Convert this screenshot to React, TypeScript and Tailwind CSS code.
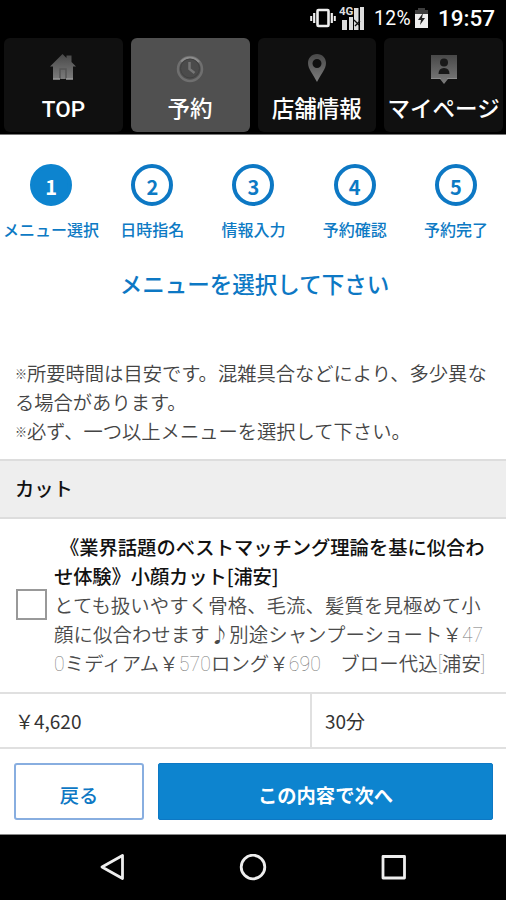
import type { ReactNode } from "react";
import clsx from "clsx";

const STEPS = ["メニュー選択", "日時指名", "情報入力", "予約確認", "予約完了"];

const DESCRIPTION: Array<Array<{ text: string; thin?: boolean }>> = [
  [{ text: "とても扱いやすく骨格、毛流、髪質を見極めて小" }],
  [{ text: "顔に似合わせます♪別途シャンプーショート￥" }, { text: "47", thin: true }],
  [
    { text: "0", thin: true },
    { text: "ミディアム￥" },
    { text: "570", thin: true },
    { text: "ロング￥" },
    { text: "690", thin: true },
    { text: "　ブロー代込" },
    { text: "[", thin: true },
    { text: "浦安" },
    { text: "]", thin: true },
  ],
];

function IconGradient({ id }: { id: string }) {
  return (
    <defs>
      <linearGradient id={id} x1="0" y1="0" x2="0" y2="1">
        <stop offset="0" stopColor="#484848" />
        <stop offset="1" stopColor="#7c7c7c" />
      </linearGradient>
    </defs>
  );
}

function HomeIcon() {
  return (
    <svg width="26" height="30" viewBox="0 0 26 30">
      <IconGradient id="home" />
      <path d="M0 13.500 12.500 1l4 4V2.500h5V9l4.500 4.500h-3V26H3V13.500Z" fill="url(#home)" />
      <path d="M10 26V16h6v10" fill="none" stroke="#555" strokeWidth="1.500" />
      <path d="M3 26h7M16 26h7" stroke="#999" strokeWidth="1.500" />
    </svg>
  );
}

function ClockIcon() {
  return (
    <svg width="28" height="30" viewBox="0 0 28 30">
      <circle cx="14" cy="16" r="12" fill="none" stroke="#6f6f6f" strokeWidth="2.500" />
      <path d="M5.200 8.700A11.600 11.600 0 0 1 23 9" fill="none" stroke="#8c8c8c" strokeWidth="2" />
      <circle cx="14" cy="15.500" r="9.500" fill="#4b4b4b" stroke="#404040" />
      <path d="M13.500 9v7l5 4" fill="none" stroke="#757575" strokeWidth="2.500" />
    </svg>
  );
}

function PinIcon() {
  return (
    <svg width="20" height="30" viewBox="0 0 20 30">
      <IconGradient id="pin" />
      <path
        d="M10 1C4.500 1 1 5 1 10c0 6 5 11 9 19 4-8 9-13 9-19 0-5-3.500-9-9-9Zm0 5a4.500 4.500 0 1 1 0 9 4.500 4.500 0 0 1 0-9Z"
        fill="url(#pin)"
        fillRule="evenodd"
      />
    </svg>
  );
}

function MyPageIcon() {
  return (
    <svg width="28" height="31" viewBox="0 0 28 31">
      <IconGradient id="my" />
      <path d="M1 2h26v24H18l-4 5-4-5H1Z" fill="url(#my)" />
      <circle cx="14" cy="9.500" r="4" fill="#181818" />
      <path d="M8.500 21q0-6 5.500-6t5.500 6Z" fill="#181818" />
      <path d="M1 25.500h10M17 25.500h10" stroke="#8c8c8c" />
    </svg>
  );
}

function StatusBar() {
  return (
    <div className="flex h-[38px] items-center justify-end pr-[11px] text-white">
      <svg className="-mt-[2px]" width="26" height="20" viewBox="0 0 26 20" fill="none" stroke="#eee">
        <rect x="7.500" y="2" width="11" height="16" rx="1" strokeWidth="2.600" />
        <path d="M4.200 5v10M21.800 5v10" strokeWidth="2.200" />
        <path d="M1.200 8v5M24.800 8v5" strokeWidth="2" />
      </svg>
      <svg className="ml-[3px] -mt-1" width="26" height="26" viewBox="0 0 26 26">
        <text x="0" y="11" fill="#ddd" fontFamily="Roboto" fontSize="11.500" fontWeight="700">
          4G
        </text>
        <path d="M3 16h5v10H3ZM10 13h4v13h-4ZM15 4h4.500v22H15ZM21 3h4v23h-4Z" fill="#ddd" />
        <path d="m15 16 5 5M21 17l-5 5" stroke="#111" strokeWidth="1.300" />
      </svg>
      <span className="ml-[9px] w-[38px] text-[19.300px] leading-none tracking-[0.4px] whitespace-nowrap">12%</span>
      <svg className="ml-[2px] -mt-[3px]" width="15" height="20" viewBox="0 0 15 20">
        <path d="M4 2V0h7v2h3v4H1V2Z" fill="#3d3d3d" />
        <path d="M1 6h13v14H1Z" fill="#eee" />
        <path d="m9 5-5 7h3l-1 5 5-7H8Z" fill="#222" />
      </svg>
      <span className="-mt-px ml-[9px] text-[22.500px] leading-none font-medium whitespace-nowrap">19:57</span>
    </div>
  );
}

function Tab({ label, icon, active }: { label: string; icon: ReactNode; active?: boolean }) {
  return (
    <div
      className={clsx(
        "flex h-[94px] flex-col items-center rounded-md pt-[15px]",
        active ? "bg-[#505050]" : "bg-[#101010]"
      )}
    >
      <div className="flex h-[32px] items-start">{icon}</div>
      <span className="mt-[9px] text-[22.500px] leading-[30px] font-medium whitespace-nowrap text-white">{label}</span>
    </div>
  );
}

export default function App() {
  return (
    <div className="flex h-[900px] w-[506px] flex-col overflow-hidden bg-white font-[Roboto,'Noto_Sans_CJK_JP',sans-serif]">
      {/* Status bar + tabs */}
      <header className="h-[135px] shrink-0 border-b border-[#777] bg-black">
        <StatusBar />
        <nav className="grid grid-cols-4 gap-[8px] pr-[3px] pl-[4px]">
          <Tab label="TOP" icon={<HomeIcon />} />
          <Tab label="予約" icon={<ClockIcon />} active />
          <Tab label="店舗情報" icon={<PinIcon />} />
          <Tab label="マイページ" icon={<MyPageIcon />} />
        </nav>
      </header>

      {/* Booking steps */}
      <ol className="grid h-[110px] shrink-0 grid-cols-5 pt-[29px] text-[#0d7ac4]">
        {STEPS.map((step, i) => (
          <li key={step} className="flex flex-col items-center pl-px">
            <span
              className={clsx(
                "flex size-[42px] items-center justify-center rounded-full border-[4px] pt-[4px] font-['Noto_Sans_CJK_JP',sans-serif] text-[20px] leading-none font-bold",
                i === 0 ? "border-[#0d84cf] bg-[#0d84cf] text-white" : "border-[#0d78c4]"
              )}
            >
              {i + 1}
            </span>
            <span className="mt-[13px] text-[16px] leading-[24px] font-medium whitespace-nowrap">{step}</span>
          </li>
        ))}
      </ol>

      <h1 className="h-[114px] shrink-0 pt-[24px] pl-[3px] text-center text-[22.500px] leading-[32px] font-medium text-[#0d78c4]">
        メニューを選択して下さい
      </h1>

      {/* Notes */}
      <div className="h-[100px] shrink-0 pl-[15px] font-['Noto_Sans_CJK_JP',sans-serif] text-[19.300px] leading-[29px] font-[350] whitespace-nowrap text-[#444]">
        <p className="flex h-[29px]">
          <span className="w-[12px] text-[12px]">※</span>
          <span>所要時間は目安です。混雑具合などにより、多少異な</span>
        </p>
        <p className="h-[29px]">る場合があります。</p>
        <p className="flex h-[29px]">
          <span className="w-[12px] text-[12px]">※</span>
          <span>必ず、一つ以上メニューを選択して下さい。</span>
        </p>
      </div>

      <h2 className="h-[60px] shrink-0 border-y-2 border-[#ddd] bg-[#eee] pl-[15px] text-[19.300px] leading-[57px] font-medium text-[#111]">
        カット
      </h2>

      {/* Menu item */}
      <div className="flex h-[173px] shrink-0 pl-[16px] font-['Noto_Sans_CJK_JP',sans-serif] text-[19.300px] leading-[29px] whitespace-nowrap">
        <span className="mt-[70px] size-[31px] shrink-0 border-2 border-[#999] bg-white" />
        <div className="pt-[14px] pl-[7px]">
          <h3 className="h-[57px] font-medium text-[#111]">
            <p className="pl-[6px]">《業界話題のベストマッチング理論を基に似合わ</p>
            <p className="tracking-[-0.1px]">せ体験》小顔カット[浦安]</p>
          </h3>
          {DESCRIPTION.map((line, i) => (
            <p key={i} className="h-[29px] text-[19.400px] font-[350] tracking-[0.08px] text-[#4a4a4a]">
              {line.map((part, j) => (
                <span key={j} className={part.thin ? "font-[Roboto] font-thin text-[#777]" : undefined}>
                  {part.text}
                </span>
              ))}
            </p>
          ))}
        </div>
      </div>
      <div className="flex h-[57px] shrink-0 border-y-2 border-[#e0e0e0] font-['Noto_Sans_CJK_JP',sans-serif] text-[19px] leading-[54px] text-[#333]">
        <span className="w-[312px] border-r-2 border-[#e0e0e0] pl-[15px]">￥4,620</span>
        <span className="pl-[13px]">30分</span>
      </div>

      {/* Actions */}
      <div className="flex h-[85px] shrink-0 gap-[14px] pt-[14px] pr-[13px] pl-[14px] text-[19.300px] leading-none">
        <button className="h-[57px] w-[130px] rounded-[3px] border-2 border-[#88aee0] pt-[10px] font-medium text-[#0d78c4]">戻る</button>
        <button className="h-[57px] flex-1 rounded-[2px] border border-[#0d78c4] bg-[#0d84cf] pt-[10px] font-bold text-white">
          この内容で次へ
        </button>
      </div>

      {/* Android navigation */}
      <footer className="flex flex-1 items-center justify-center gap-[113px] border-t border-[#888] bg-black">
        <svg width="28" height="28" viewBox="0 0 28 28" fill="none" stroke="#eee" strokeWidth="2.800" strokeLinejoin="round">
          <path d="M4 13 24.500 1.500v23Z" />
        </svg>
        <svg width="28" height="28" viewBox="0 0 28 28" fill="none" stroke="#eee" strokeWidth="2.800">
          <circle cx="14" cy="13" r="11.800" />
        </svg>
        <svg width="28" height="28" viewBox="0 0 28 28" fill="none" stroke="#eee" strokeWidth="2.800" strokeLinejoin="round">
          <rect x="3" y="2.500" width="21.500" height="21.500" />
        </svg>
      </footer>
    </div>
  );
}
